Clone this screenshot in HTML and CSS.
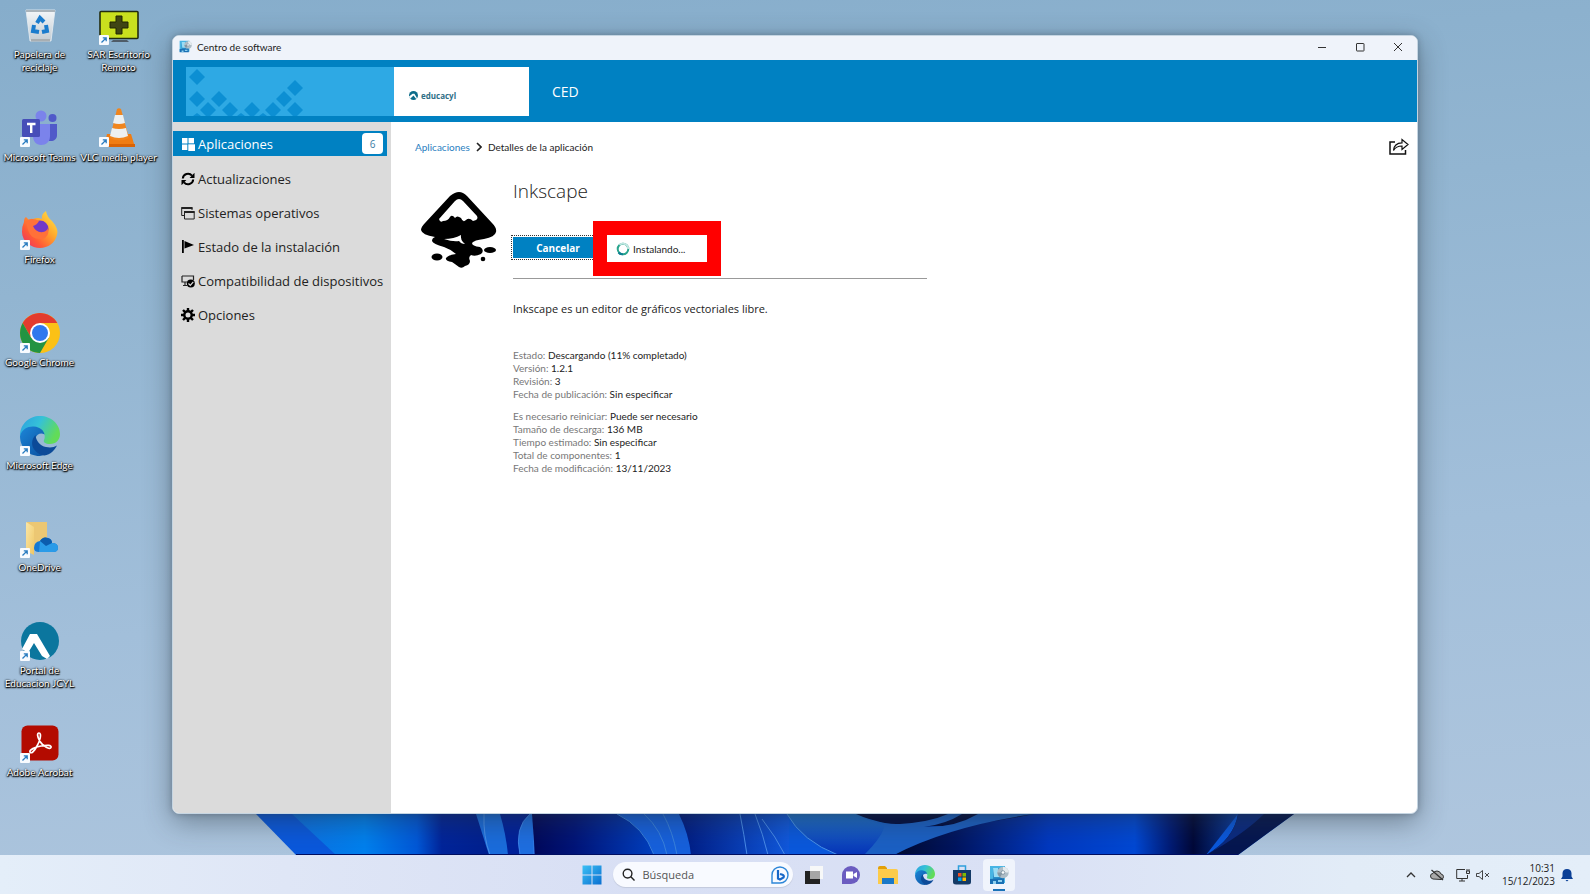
FILE: index.html
```html
<!DOCTYPE html>
<html lang="es">
<head>
<meta charset="utf-8">
<title>Centro de software</title>
<link rel="stylesheet" href="styles.css">
</head>
<body>
<svg class="defs" aria-hidden="true">
  <defs>
    <linearGradient id="gEdgeTop" x1="0" y1="0" x2="1" y2="0.4"><stop offset="0" stop-color="#2b9fe0"/><stop offset=".5" stop-color="#35c1d8"/><stop offset="1" stop-color="#62dc58"/></linearGradient>
    <linearGradient id="gEdgeLow" x1="0" y1="0" x2="1" y2="1"><stop offset="0" stop-color="#1c86d8"/><stop offset="1" stop-color="#0b4f9e"/></linearGradient>
    <linearGradient id="gFox" x1="1" y1="0" x2="0" y2="1"><stop offset="0" stop-color="#fff04a"/><stop offset=".4" stop-color="#ffa62c"/><stop offset=".7" stop-color="#ff5a36"/><stop offset="1" stop-color="#e62a70"/></linearGradient>
    <linearGradient id="gFolder" x1="0" y1="0" x2="1" y2="1"><stop offset="0" stop-color="#fbe6a6"/><stop offset="1" stop-color="#efc765"/></linearGradient>
    <linearGradient id="gStart" x1="0" y1="0" x2="1" y2="1"><stop offset="0" stop-color="#3cc0f5"/><stop offset="1" stop-color="#0a6fd0"/></linearGradient>
    <linearGradient id="gBin" x1="0" y1="0" x2="0" y2="1"><stop offset="0" stop-color="#f4f7f9"/><stop offset="1" stop-color="#c3ccd3"/></linearGradient>
    <symbol id="shortcut" viewBox="0 0 10 10"><rect width="10" height="10" rx="1" fill="#f8fbff"/><path d="M2.500 7.500 7 3M3.800 2.800H7.200V6.200" fill="none" stroke="#2a7cc0" stroke-width="1.300"/></symbol>
    <symbol id="edge" viewBox="0 0 40 40">
      <path d="M0 20C0 8 9 0 20 0s20 8 20 18c0 6-4 10-10 10-5 0-7-2-6-4 2-4 0-9-5-10C10 12 3 14 0 20z" fill="url(#gEdgeTop)"/>
      <path d="M0 20C2 13 8 10 14 10.500c6 .5 10 4 10.500 8-3-2-8-1-9 4-1 7 5 12 12 13-3 3-6 4.500-8 4.500C8 40 0 31 0 20z" fill="url(#gEdgeLow)"/>
      <path d="M15.500 19c-4 4-5 11 0 16 3 3 6 4.600 9 4.600 6-1 10-5 12.500-10-3 2-7 2.500-11 1.500-6-1.500-10-6-10.500-12.100z" fill="#0c4a98"/>
    </symbol>
    <symbol id="center" viewBox="0 0 20 20">
      <path d="M1 1h15v17H1z" fill="#48b5e4"/><path d="M4 3h10v15H4z" fill="#2b8fc9"/><path d="M4 3h5l2 9H5z" fill="#9adcf4"/><path d="M1 14l14-1v6H1z" fill="#1a70b4"/><path d="M4 16h3v3H4zM9 15h4v2H9z" fill="#8fd0ee"/>
      <circle cx="14" cy="7.500" r="5.700" fill="#aebdc7"/><path d="M14 1.800a5.700 5.700 0 0 1 5.700 5.700H14z" fill="#e4eaee"/><path d="M8.300 7.500H14l-3 4.800q-2.500-1.500-2.700-4.800z" fill="#8497a4"/><circle cx="14" cy="7.500" r="1.800" fill="#f6fafc" stroke="#6c8292" stroke-width=".7"/>
    </symbol>
  </defs>
</svg>

<main class="desktop">
  <svg class="bloom" viewBox="0 0 1590 41" preserveAspectRatio="none" aria-hidden="true">
    <defs>
      <linearGradient id="b1"><stop offset="0" stop-color="#0d6fe0"/><stop offset=".35" stop-color="#0080ee"/><stop offset=".6" stop-color="#0058d8"/><stop offset=".72" stop-color="#00249a"/><stop offset="1" stop-color="#001f8c"/></linearGradient>
      <linearGradient id="b2"><stop offset="0" stop-color="#00085a"/><stop offset=".25" stop-color="#001478"/><stop offset="1" stop-color="#0058e8"/></linearGradient>
      <linearGradient id="b3"><stop offset="0" stop-color="#001a80"/><stop offset="1" stop-color="#1058dc"/></linearGradient>
      <linearGradient id="b5"><stop offset="0" stop-color="#000a30"/><stop offset=".18" stop-color="#001560"/><stop offset=".45" stop-color="#0038c0"/><stop offset=".7" stop-color="#0048d4"/><stop offset=".8" stop-color="#001c78"/><stop offset=".87" stop-color="#000838"/><stop offset="1" stop-color="#0a3ca0"/></linearGradient>
      <linearGradient id="b6" x1="0" x2="0" y1="0" y2="1"><stop offset="0" stop-color="#1f72cc"/><stop offset="1" stop-color="#0634b8"/></linearGradient>
    </defs>
    <path d="M256 0H1294L1238 41H296Z" fill="#0a58dc"/>
    <path d="M292 0H500V41H336Z" fill="url(#b1)"/>
    <path d="M500 0h35v41H500z" fill="#00219a"/>
    <path d="M476 0h24q6 20 8 41h-19z" fill="#1a6cdc"/><path d="M484 0q-1 22 6 41" fill="none" stroke="#4a90e8"/>
    <path d="M530 0h4v41h-14q-6-28 10-41z" fill="#1e6ee0" stroke="#3c83e6"/>
    <path d="M532 0H700V41H535Z" fill="url(#b2)"/>
    <path d="M617 0h62q10 20 12 41h-37q-10-28-37-41z" fill="#1660dc"/>
    <path d="M617 0q27 13 37 41M644 0q18 16 23 41M663 0q10 18 14 41" fill="none" stroke="#3a82dc"/>
    <path d="M679 0h110v41h-98q-2-21-12-41z" fill="url(#b3)"/>
    <path d="M740 0q4 20 7 41M755 0q8 20 13 41M762 5q14 18 23 36" fill="none" stroke="#4a8ce8"/>
    <path d="M787 0h90l60 20-43 21h-56Q802 27 787 0z" fill="url(#b6)"/>
    <path d="M787 0Q802 27 838 41" fill="none" stroke="#4a94e8"/>
    <path d="M894 41Q940 12 1034 0H1238L1206 41Z" fill="url(#b5)"/>
    <path d="M856 0Q910 25 1034 0z" fill="#000c40"/>
    <path d="M856 0q20 11 44 10 30-2 48-10h14q-16 10-38 13 30 1 54-13h56Q950 12 894 41h-30q20-20 20-30-15-4-28-11z" fill="#1b60c4"/>
    <path d="M1238 0h56l-56 41h-32q28-16 32-41z" fill="#051650"/>
    <path d="M1238 0h26q-20 20-58 41 28-16 32-41z" fill="#0a2a80"/>
    <path d="M296 40.500H1238" stroke="#000e60"/>
  </svg>

  <nav class="shortcuts" aria-label="Escritorio">
    <a class="shortcut" href="#"><svg class="shortcut-icon" viewBox="0 0 40 40"><path d="M6 5h29l-4 31H10z" fill="url(#gBin)" stroke="#e9eff4" stroke-width=".8"/><path d="M6 5h29v2H6z" fill="#aab4bb"/><path d="M11 34h19v2.500H11z" fill="#a8aeb2"/><g fill="none" stroke="#1b7ccd" stroke-width="4"><path d="m17 18 3-5 4 4"/><path d="m26 20 1 6-5 1"/><path d="m14 20-1 6 6 1"/></g></svg><span>Papelera de reciclaje</span></a>
    <a class="shortcut" href="#"><svg class="shortcut-icon" viewBox="0 0 40 40"><rect x="1" y="6.500" width="38" height="27" rx="1" fill="#c9e01e" stroke="#222c10" stroke-width="1.600"/><path d="M17 11h6v6h6v6h-6v6h-6v-6h-6v-6h6z" fill="#3f4514" stroke="#202600"/><path d="M14 35h14l2 2H12z" fill="#4f5c68"/><use href="#shortcut" x="0" y="30" width="10" height="10"/></svg><span>SAR Escritorio Remoto</span></a>
    <a class="shortcut" href="#"><svg class="shortcut-icon" viewBox="0 0 40 40"><circle cx="21" cy="8" r="5.500" fill="#7b83eb"/><circle cx="32.500" cy="10" r="4" fill="#5059c9"/><path d="M29 16h8v11c0 4-3 6-6 6h-2z" fill="#5059c9"/><path d="M13 16h17v12c0 6-4 9-9 9s-8-4-8-9z" fill="#7b83eb"/><rect x="2" y="11" width="18" height="18" rx="1.500" fill="#464eb8"/><path d="M7 16h8.500M11.200 16v9" stroke="#fff" stroke-width="2.400"/><use href="#shortcut" x="0" y="29" width="10" height="10"/></svg><span>Microsoft Teams</span></a>
    <a class="shortcut" href="#"><svg class="shortcut-icon" viewBox="0 0 40 40"><path d="M8 26h24l4 13H5z" fill="#f07c12"/><path d="M18 1q2-1.500 4 0l8 29q-10 5-19 0z" fill="#f0851d"/><path d="m16 7h8l2 8q-6 2-12 0zM13 20q7 2 14 0l2 8q-9 4-18 0z" fill="#edf0f0"/><path d="M4 36h32v3H4z" fill="#d96305"/><use href="#shortcut" x="0" y="29" width="10" height="10"/></svg><span>VLC media player</span></a>
    <a class="shortcut shortcut-first" href="#"><svg class="shortcut-icon" viewBox="0 0 40 40"><path d="M4 12q0-4 2-5l3 3q2-2 4-1 5-2 9 0-1-5 4-8 1 6 6 10 7 8 5 14c-2 8-9 13-17 13S2 32 2 22q0-6 2-10z" fill="url(#gFox)"/><circle cx="20" cy="19" r="8.500" fill="#7138c8"/><path d="M6 11q6-4 13 0-2 4-6 5 3 7 10 6 4-1 5-4 2 9-6 11-11 1-14-9z" fill="#ff7139"/><use href="#shortcut" x="0" y="30" width="10" height="10"/></svg><span>Firefox</span></a>
    <a class="shortcut shortcut-first" href="#"><svg class="shortcut-icon" viewBox="0 0 40 40"><circle cx="20" cy="20" r="20" fill="#fbc116"/><path d="M2.700 10A20 20 0 0 1 37.300 10H20L11.300 25z" fill="#e33b2e"/><path d="M2.700 10A20 20 0 0 0 20 40l8.700-15L11.300 25z" fill="#229342"/><circle cx="20" cy="20" r="10" fill="#fff"/><circle cx="20" cy="20" r="8" fill="#2f78ee"/><use href="#shortcut" x="0" y="30" width="10" height="10"/></svg><span>Google Chrome</span></a>
    <a class="shortcut shortcut-first" href="#"><svg class="shortcut-icon" viewBox="0 0 40 40"><use href="#edge" width="40" height="40"/><use href="#shortcut" x="0" y="30" width="10" height="10"/></svg><span>Microsoft Edge</span></a>
    <a class="shortcut shortcut-first" href="#"><svg class="shortcut-icon" viewBox="0 0 40 40"><path d="M7 4h20v28H7z" fill="#ecc773"/><path d="M6 4l8 5v28l-8-4z" fill="url(#gFolder)"/><path d="M14 30q0-6 6-7 3-5 8-3 4 1 4 5 6 0 6 5 0 4-5 4H19q-5 0-5-4z" fill="#1479d4"/><path d="m20 23q6 2 12 2 6 0 6 5 0 4-5 4H19z" fill="#2a9be8"/><path d="M20 23q3-5 8-3 4 1 4 5l-6 3z" fill="#0b5cae"/><use href="#shortcut" x="0" y="30" width="10" height="10"/></svg><span>OneDrive</span></a>
    <a class="shortcut shortcut-first" href="#"><svg class="shortcut-icon" viewBox="0 0 40 40"><circle cx="20" cy="20" r="19" fill="#0b769e"/><path d="M2 28 10 13h7l13 22-3 3-5-3-8-13-6 10z" fill="#fff"/><use href="#shortcut" x="0" y="30" width="10" height="10"/></svg><span>Portal de Educacion JCYL</span></a>
    <a class="shortcut shortcut-first" href="#"><svg class="shortcut-icon" viewBox="0 0 40 40"><rect x="1.500" y="2.500" width="37" height="35" rx="6" fill="#b30b00"/><path d="M19 10c3 0 1 8-2 13-3 6-6 8-7 6s5-5 11-6 11-1 10 1.500-8-1-11-6-3-8.500-1-8.500z" fill="none" stroke="#fff" stroke-width="1.700"/><use href="#shortcut" x="0" y="30" width="10" height="10"/></svg><span>Adobe Acrobat</span></a>
  </nav>

  <section class="window" aria-label="Centro de software">
    <div class="titlebar">
      <svg class="title-icon" viewBox="0 0 20 20"><use href="#center"/></svg>
      <span class="title-text">Centro de software</span>
      <button class="win-btn" aria-label="Minimizar"><svg viewBox="0 0 10 10"><path d="M1 5.500h8"/></svg></button>
      <button class="win-btn" aria-label="Maximizar"><svg viewBox="0 0 10 10"><rect x="1.500" y="1.500" width="7.500" height="7.500" rx=".5"/></svg></button>
      <button class="win-btn" aria-label="Cerrar"><svg viewBox="0 0 10 10"><path d="m1 1 8 8M9 1 1 9"/></svg></button>
    </div>
    <header class="brand">
      <svg class="brand-pattern" viewBox="0 0 208 49" aria-hidden="true">
        <rect width="208" height="49" fill="#2ea9e4"/>
        <path d="M11 2l8 8-8 8-8-8zM11 24l8 8-8 8-8-8zM33 24l8 8-8 8-8-8zM22 35l8 8-8 8-8-8zM44 35l8 8-8 8-8-8zM66 35l8 8-8 8-8-8zM87 35l8 8-8 8-8-8zM98 24l8 8-8 8-8-8zM109 13l8 8-8 8-8-8zM109 35l8 8-8 8-8-8zM11 46l4 3H7zM55 46l4 3h-8zM77 46l4 3h-8z" fill="#0c8fd3"/>
      </svg>
      <div class="brand-logo"><svg viewBox="0 0 10 10"><circle cx="5" cy="5" r="5" fill="#0c6c8a"/><path d="M1 9 0 6l4-3h2l3 5-1 1-3-4z" fill="#fff"/></svg>educacyl</div>
      <span class="brand-name">CED</span>
    </header>
    <div class="body">
      <nav class="sidebar">
        <a class="nav-item nav-active" href="#"><svg viewBox="0 0 14 14" fill="#fff"><path d="M1 1h5.500v5.500H1zM7.500 1H13v5.500H7.500zM1 7.500h5.500V13H1zM7 7h7v7H7z"/><path d="M7 14V7h7" fill="none" stroke="#0081c2" stroke-width=".6"/></svg><span>Aplicaciones</span><b class="badge">6</b></a>
        <a class="nav-item" href="#"><svg viewBox="0 0 14 14" fill="none" stroke="#000" stroke-width="2"><path d="M1.800 6.500A5.200 5.200 0 0 1 11 3.600M12.200 7.500A5.200 5.200 0 0 1 3 10.400"/><path d="M13.500 .8V6H8.600zM.5 13.200V8h4.900z" fill="#000" stroke="none"/></svg><span>Actualizaciones</span></a>
        <a class="nav-item" href="#"><svg viewBox="0 0 14 14" fill="none" stroke="#222"><path d="M3 9.500H.7v-8H11V4"/><path d="M.5 2h11" stroke-width="2"/><path d="M3.500 5.500h9.700v7.500H3.500z"/><path d="M3 6h10.500" stroke-width="2"/></svg><span>Sistemas operativos</span></a>
        <a class="nav-item" href="#"><svg viewBox="0 0 14 14"><path d="M1 0h1.800v13H1zM3.500 1 13 5 3.500 8.500z"/></svg><span>Estado de la instalación</span></a>
        <a class="nav-item" href="#"><svg viewBox="0 0 14 14"><path d="M1 2h11.500v4M1 2v6h5M2 11.500h4M4 8v3" fill="none" stroke="#222" stroke-width="1.200"/><circle cx="9.800" cy="9.500" r="4" fill="#000"/><path d="m7.500 9.500 1.800 1.800 3-3.500" fill="none" stroke="#ddd" stroke-width="1.200"/></svg><span>Compatibilidad de dispositivos</span></a>
        <a class="nav-item" href="#"><svg viewBox="0 0 14 14"><circle cx="7" cy="7" r="3.700" fill="none" stroke="#000" stroke-width="2.400"/><path d="M7 0v3M7 11v3M0 7h3M11 7h3M2 2l2.200 2.200M9.800 9.800 12 12M12 2 9.800 4.200M4.200 9.800 2 12" stroke="#000" stroke-width="2.400"/></svg><span>Opciones</span></a>
      </nav>
      <article class="content">
        <div class="crumb-row">
          <nav class="crumbs"><a href="#">Aplicaciones</a><svg viewBox="0 0 6 10"><path d="m1 1 4 4-4 4" fill="none" stroke="#222" stroke-width="1.600"/></svg><span>Detalles de la aplicación</span></nav>
          <button class="share" aria-label="Compartir"><svg viewBox="0 0 20 17" fill="none" stroke="#111" stroke-width="1.500"><path d="M6 4H1v12h15.500v-4"/><path d="M4.500 12.500Q5 5 13 4.800V1.500l6 5-6 5V8Q7 8 4.500 12.500z" stroke-width="1.200"/></svg></button>
        </div>
        <div class="app">
          <svg class="app-logo" viewBox="0 0 78 78" role="img" aria-label="Inkscape">
            <path d="M39 1q4 0 8 4l25 27q5 5 4 9-1 5-12 7-10 1-12 4 0 3 8 4 5 3 1 7-6 3-10 1-3 2-1 6 0 4-5 5-3 3-6 1-4-3-7-5-7-1-6-4 2-3 10-4-6-5-12-7-11-3-12-6 0-3 3-4-13-2-14-7 0-3 4-7L30 5q5-4 9-4z" fill="#000"/>
            <path d="M39 8q2 0 4 2l14 15q2 4-4 5-4-4-7-1-3 3-5-2-4-3-6 0-3-4-5-1-2 4-7 4-3 2-4-2L35 10q2-2 4-2z" fill="#fff"/>
            <path d="M24 48q10 0 17-4-1 5 4 9-4 0-6-3-6 1-15-2z" fill="#fff"/>
            <ellipse cx="17" cy="66" rx="5.500" ry="3.500"/><ellipse cx="70" cy="59" rx="6" ry="3"/><circle cx="63" cy="68" r="2.300"/>
          </svg>
          <div class="app-info">
            <h1>Inkscape</h1>
            <div class="actions">
              <button class="cancel">Cancelar</button>
              <div class="status" role="status"><svg viewBox="0 0 14 14" fill="none" stroke-width="2"><circle cx="7" cy="7" r="5.300" stroke="#2aa58e"/><path d="M3.500 3A5.300 5.300 0 0 1 12.300 7" stroke="#bfe6e0"/><path d="M2.500 10.500A5.300 5.300 0 0 0 7 12.300" stroke="#0d7f92"/></svg>Instalando...</div>
            </div>
            <p class="summary">Inkscape es un editor de gráficos vectoriales libre.</p>
            <dl class="facts">
              <div><dt>Estado:</dt> <dd>Descargando (11% completado)</dd></div>
              <div><dt>Versión:</dt> <dd>1.2.1</dd></div>
              <div><dt>Revisión:</dt> <dd>3</dd></div>
              <div><dt>Fecha de publicación:</dt> <dd>Sin especificar</dd></div>
            </dl>
            <dl class="facts">
              <div><dt>Es necesario reiniciar:</dt> <dd>Puede ser necesario</dd></div>
              <div><dt>Tamaño de descarga:</dt> <dd>136 MB</dd></div>
              <div><dt>Tiempo estimado:</dt> <dd>Sin especificar</dd></div>
              <div><dt>Total de componentes:</dt> <dd>1</dd></div>
              <div><dt>Fecha de modificación:</dt> <dd>13/11/2023</dd></div>
            </dl>
          </div>
        </div>
      </article>
    </div>
  </section>
</main>

<footer class="taskbar">
  <div class="pinned">
    <button class="task" aria-label="Inicio"><svg viewBox="0 0 20 20" fill="url(#gStart)"><path d="M.5 .5h9v9h-9zM10.500 .5h9v9h-9zM.5 10.500h9v9h-9zM10.500 10.500h9v9h-9z"/></svg></button>
    <label class="search"><svg viewBox="0 0 14 14" fill="none" stroke="#222" stroke-width="1.500"><circle cx="6" cy="6" r="4.700"/><path d="m9.500 9.500 4 4"/></svg><input type="text" placeholder="Búsqueda" aria-label="Búsqueda"><svg class="bing" viewBox="0 0 18 18" fill="none" stroke="#2d86d8"><path d="M1 17V9a8 8 0 1 1 8 8z" stroke-width="1.400"/><path d="M7 4v8.500l2 1 3.500-2q1-2-1-2.800L9 8" stroke-width="2.200" stroke="#1767c8"/></svg></label>
    <button class="task" aria-label="Vista de tareas"><svg viewBox="0 0 20 20"><path d="M6 1h13v13H6z" fill="#f7f8f8"/><path d="M1 6h15v13H1z" fill="#222"/><path d="M6 6h10v8H6z" fill="#a6a6a6"/></svg></button>
    <button class="task" aria-label="Chat"><svg viewBox="0 0 20 20"><path d="M1 19V10a9 9 0 1 1 9 9z" fill="#6b5cc0"/><path d="M5 6.500h7v7H5zM12.500 9 16 7v6l-3.500-2z" fill="#fff"/></svg></button>
    <button class="task" aria-label="Explorador de archivos"><svg viewBox="0 0 20 20"><path d="M0 3q0-2 2-2h5l2 2h0v4H0z" fill="#e3a008"/><path d="M0 4h18q2 0 2 2v13H0z" fill="#fccb4a"/><path d="M4 13h12v6H4z" fill="#1a78c8"/></svg></button>
    <button class="task" aria-label="Microsoft Edge"><svg viewBox="0 0 40 40"><use href="#edge"/></svg></button>
    <button class="task" aria-label="Microsoft Store"><svg viewBox="0 0 20 20"><path d="M6.500 5V1h7v4" fill="none" stroke="#2f9fdc" stroke-width="1.500"/><path d="M1 5h18v12q0 2.500-3 2.500H4q-3 0-3-2.500z" fill="#143a66"/><path d="M6 8h3.500v3.500H6z" fill="#f25022"/><path d="M10.500 8H14v3.500h-3.500z" fill="#7fba00"/><path d="M6 12.500h3.500V16H6z" fill="#00a4ef"/><path d="M10.500 12.500H14V16h-3.500z" fill="#ffb900"/></svg></button>
    <button class="task task-open" aria-label="Centro de software"><svg viewBox="0 0 20 20"><use href="#center"/></svg></button>
  </div>
  <div class="tray">
    <button aria-label="Mostrar iconos ocultos"><svg viewBox="0 0 14 14"><path d="m3 9 4-4 4 4" stroke-width="1.300"/></svg></button>
    <button aria-label="OneDrive"><svg viewBox="0 0 14 14"><path d="M3 11q-2.500-.5-2.500-3T3 5.500Q4 3 7 3t4 3q2.500.5 2.500 2.800T11 11.500z" fill="#aaa"/><path d="m1.500 2 11.500 10" stroke-width="1.300"/></svg></button>
    <button aria-label="Red"><svg viewBox="0 0 14 14"><path d="M9 1.500H.7v9H11.500V7M6 10.500V13M3 13h6M11 1v2M13 1v2M10.500 3h3v2.500h-3z"/></svg></button>
    <button class="volume" aria-label="Volumen"><svg viewBox="0 0 14 14"><path d="M.5 5.500H3L6.500 2.500v9L3 8.500H.5zM9 5l4 4M13 5 9 9" stroke-width=".9"/></svg></button>
    <time class="clock">10:31<br>15/12/2023</time>
    <button aria-label="Notificaciones"><svg viewBox="0 0 14 14"><path d="M7 1q4 0 4.500 4v3.500L13 11H1l1.500-2.500V5Q3 1 7 1zM5.500 12h3l-1.500 1.500z" fill="#0a3f96" stroke="none"/></svg></button>
  </div>
</footer>
</body>
</html>
```
FILE: styles.css
```css
* { box-sizing: border-box; }
body {
  margin: 0;
  min-height: 100vh;
  display: flex;
  flex-direction: column;
  font-family: "Open Sans", "Noto Sans", sans-serif;
  font-size: 10px;
  color: #222;
}
button { border: 0; padding: 0; background: none; font: inherit; color: inherit; }
a { color: inherit; text-decoration: none; }
svg { display: block; flex: none; }
.defs { position: absolute; width: 0; height: 0; }
.shortcut, .title-text, .crumbs, .status, .facts { font-family: Lato, "Open Sans", sans-serif; }

/* Desktop */
.desktop {
  position: relative;
  flex: 1;
  display: flex;
  overflow: hidden;
  background: linear-gradient(175deg, #86adcb 0%, #92b5d1 30%, #a2bfda 65%, #afc6de 100%);
}
.bloom { position: absolute; left: 0; bottom: 0; width: 100%; height: 41px; }
.shortcuts {
  display: grid;
  grid-template: repeat(8, 1fr) / 79px 79px;
  padding: 5px 0 29px;
}
.shortcut {
  display: flex;
  flex-direction: column;
  align-items: center;
  gap: 3px;
  color: #fff;
  line-height: 13px;
  text-align: center;
  text-shadow: 0 1px 2px #000, 1px 1px 1px #000, 0 0 2px #000;
}
.shortcut span { margin: 0 -2px; }
.shortcut-first { grid-column: 1; }
.shortcut-icon { width: 40px; height: 40px; }

/* Window */
.window {
  position: absolute;
  inset: 35px 172px 41px;
  display: flex;
  flex-direction: column;
  overflow: hidden;
  border: 1px solid #c5d5e2;
  border-radius: 7px;
  background: #fff;
  box-shadow: 0 8px 28px rgba(40, 50, 60, .45), 0 0 6px rgba(40, 50, 60, .3);
}
.titlebar {
  display: flex;
  align-items: center;
  height: 24px;
  padding: 0 0 3px 6px;
  background: #eff3fa;
}
.title-icon { width: 13px; height: 13px; margin-right: 5px; }
.title-text { flex: 1; }
.win-btn { display: grid; place-items: center; width: 38px; height: 20px; }
.win-btn svg { width: 10px; height: 10px; fill: none; stroke: #333; stroke-width: 1; }
.brand {
  display: flex;
  align-items: center;
  height: 62px;
  padding-left: 13px;
  background: #0081c2;
}
.brand-pattern { width: 208px; height: 49px; }
.brand-logo {
  display: flex;
  align-items: center;
  gap: 3px;
  width: 135px;
  height: 49px;
  padding: 8px 0 0 15px;
  background: #fff;
  color: #2f6f86;
  font-size: 8px;
  font-weight: 700;
}
.brand-logo svg { width: 9px; height: 9px; }
.brand-name { margin-left: 23px; font-size: 14px; color: #fff; }
.body { flex: 1; display: flex; }
.sidebar {
  display: flex;
  flex-direction: column;
  gap: 9px;
  width: 218px;
  padding: 9px 4px 0 0;
  background: #dbdbdb;
}
.nav-item {
  display: flex;
  align-items: center;
  gap: 3px;
  height: 25px;
  padding: 0 4px 0 8px;
  font-size: 13px;
  white-space: nowrap;
}
.nav-item svg { width: 14px; height: 14px; }
.nav-active { margin-bottom: 1px; background: #0081c2; color: #fff; }
.badge {
  display: grid;
  place-items: center;
  width: 21px;
  height: 21px;
  margin-left: auto;
  border-radius: 4px;
  background: #fff;
  color: #3a7ca5;
  font-size: 10px;
  font-weight: 400;
}
.content { flex: 1; padding: 12px 8px 0 24px; }
.crumb-row { display: flex; align-items: center; justify-content: space-between; height: 25px; }
.crumbs { display: flex; align-items: center; gap: 6px; }
.crumbs a { color: #2a80bf; }
.crumbs svg { width: 6px; height: 10px; }
.share svg { width: 20px; height: 17px; }
.app { display: flex; gap: 15px; padding: 18px 0 0 5px; }
.app-logo { width: 78px; height: 78px; margin-top: 14px; }
.app-info { flex: 0 1 414px; }
h1 { margin: 0; font-size: 19px; font-weight: 300; line-height: 28px; }
.actions {
  display: flex;
  align-items: center;
  height: 74px;
  padding: 16px 0 2px;
  border-bottom: 1px solid #999;
  margin-bottom: 22px;
}
.cancel {
  width: 90px;
  height: 21px;
  margin-bottom: 2px;
  background: #0081c2;
  color: #fff;
  font-weight: 700;
  outline: 1px dotted #333;
  outline-offset: 1px;
}
.status {
  position: relative;
  display: flex;
  align-items: center;
  gap: 3px;
  height: 55px;
  margin-left: -10px;
  width: 128px;
  padding-left: 9px;
  border: 14px solid #f00;
  background: #fff;
}
.status svg { width: 14px; height: 14px; }
.summary { margin: 0 0 32px; font-size: 11px; line-height: 16px; }
.facts { margin: 0 0 9px; line-height: 13px; }
.facts dt, .facts dd { display: inline; margin: 0; }
.facts dt { color: #777; }

/* Taskbar */
.taskbar {
  display: grid;
  grid-template-columns: 1fr auto 1fr;
  align-items: center;
  height: 39px;
  background: linear-gradient(90deg, #e4eef9 0%, #dfe6f6 18%, #d8dff4 40%, #dae1f5 65%, #e2ecf7 85%, #e4eef9 100%);
}
.pinned { grid-column: 2; display: flex; align-items: center; gap: 5px; }
.task { display: grid; place-items: center; width: 32px; height: 32px; border-radius: 4px; }
.task svg { width: 20px; height: 20px; }
.task-open {
  background: linear-gradient(#1a72b8, #1a72b8) center bottom / 12px 2px no-repeat, #f0f4fc;
}
.search {
  display: flex;
  align-items: center;
  gap: 8px;
  width: 180px;
  height: 25px;
  padding: 0 4px 0 9px;
  border-radius: 13px;
  background: #f8faff;
  box-shadow: 0 1px 1px #c2c9dc;
}
.search svg { width: 13px; height: 13px; }
.search .bing { width: 18px; height: 18px; }
.search input {
  flex: 1;
  min-width: 0;
  border: 0;
  padding: 0;
  background: none;
  font: inherit;
  font-size: 11px;
}
.search input::placeholder { color: #555; opacity: 1; }
.tray { display: flex; align-items: center; justify-content: flex-end; gap: 12px; padding-right: 16px; }
.tray svg { width: 14px; height: 14px; fill: none; stroke: #333; }
.volume { margin-left: -6px; }
.clock { margin-right: -7px; line-height: 13px; text-align: right; }
```
